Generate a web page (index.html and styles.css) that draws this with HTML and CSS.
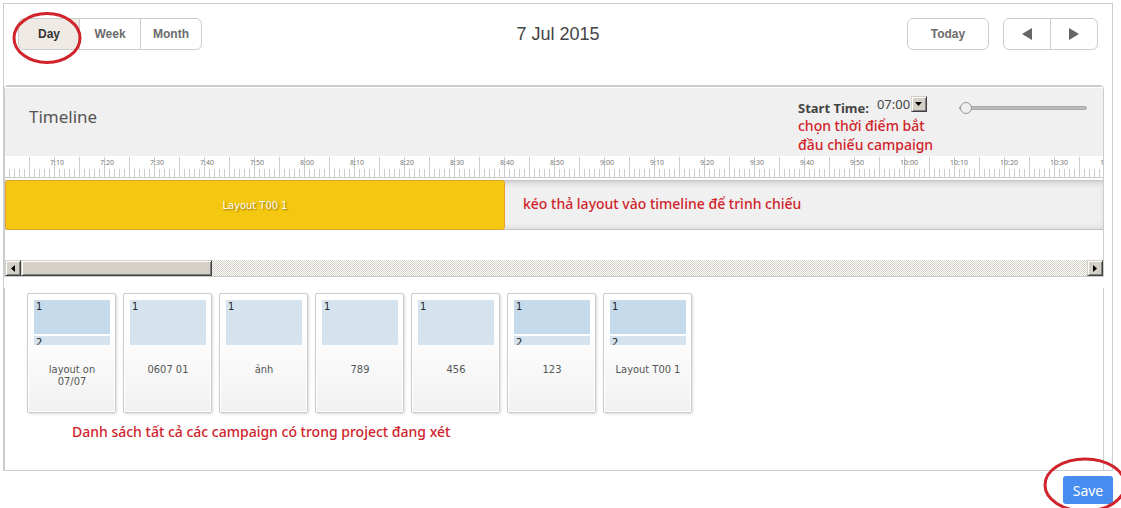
FILE: index.html
```
<!DOCTYPE html>
<html lang="vi">
<head>
<meta charset="utf-8">
<title>Timeline</title>
<link rel="stylesheet" href="styles.css">
</head>
<body>
<div class="page">
  <main class="scheduler">
    <header class="toolbar">
      <div class="views">
        <button class="btn active" type="button">Day
          <svg class="ring ring-day" viewBox="0 0 70 52" aria-hidden="true"><ellipse cx="35" cy="26" rx="33" ry="24.5"/></svg>
        </button>
        <button class="btn" type="button">Week</button>
        <button class="btn" type="button">Month</button>
      </div>
      <h1 class="date">7 Jul 2015</h1>
      <div class="nav">
        <button class="btn today" type="button">Today</button>
        <div class="pager">
          <button class="btn" type="button" aria-label="Previous"><svg width="10" height="12" viewBox="0 0 10 12"><path d="M10 0v12L0 6z"/></svg></button>
          <button class="btn" type="button" aria-label="Next"><svg width="10" height="12" viewBox="0 0 10 12"><path d="M0 0v12l10-6z"/></svg></button>
        </div>
      </div>
    </header>

    <section class="timeline">
      <div class="head">
        <h2 class="title">Timeline</h2>
        <div class="controls">
          <div class="start">
            <div class="start-row">
              <label for="start">Start Time:</label>
              <span class="select">
                <select id="start"><option>07:00</option></select>
                <span class="drop bevel"><svg width="7" height="4" viewBox="0 0 7 4"><path d="M0 0h7L3.500 4z"/></svg></span>
              </span>
            </div>
            <p class="note">chọn thời điểm bắt<br>đầu chiếu campaign</p>
          </div>
          <input class="zoom" type="range" min="0" max="100" value="0" aria-label="Zoom">
        </div>
      </div>
      <div class="ruler">
        <span>7:10</span><span>7:20</span><span>7:30</span><span>7:40</span><span>7:50</span><span>8:00</span><span>8:10</span><span>8:20</span><span>8:30</span><span>8:40</span><span>8:50</span><span>9:00</span><span>9:10</span><span>9:20</span><span>9:30</span><span>9:40</span><span>9:50</span><span>10:00</span><span>10:10</span><span>10:20</span><span>10:30</span><span>10:40</span>
      </div>
      <div class="track">
        <div class="event" style="width:500px">Layout T00 1</div>
        <p class="note">kéo thả layout vào timeline để trình chiếu</p>
      </div>
      <div class="scrollbar">
        <button class="bevel arrow" type="button" aria-label="Scroll left"><svg width="4" height="7" viewBox="0 0 4 7"><path d="M4 0v7L0 3.500z"/></svg></button>
        <div class="bevel thumb"></div>
        <button class="bevel arrow end" type="button" aria-label="Scroll right"><svg width="4" height="7" viewBox="0 0 4 7"><path d="M0 0v7l4-3.500z"/></svg></button>
      </div>
    </section>

    <section class="library">
      <ul class="cards">
        <li class="card"><div class="thumbnail split"><span>1</span><span>2</span></div><p>layout on 07/07</p></li>
        <li class="card"><div class="thumbnail"><span>1</span></div><p>0607 01</p></li>
        <li class="card"><div class="thumbnail"><span>1</span></div><p>ảnh</p></li>
        <li class="card"><div class="thumbnail"><span>1</span></div><p>789</p></li>
        <li class="card"><div class="thumbnail"><span>1</span></div><p>456</p></li>
        <li class="card"><div class="thumbnail split"><span>1</span><span>2</span></div><p>123</p></li>
        <li class="card"><div class="thumbnail split"><span>1</span><span>2</span></div><p>Layout T00 1</p></li>
      </ul>
      <p class="note">Danh sách tất cả các campaign có trong project đang xét</p>
    </section>
  </main>
  <footer class="footer">
    <button class="save" type="button">Save
      <svg class="ring ring-save" viewBox="0 0 84 56" aria-hidden="true"><ellipse cx="42" cy="28" rx="40" ry="26"/></svg>
    </button>
  </footer>
</div>
</body>
</html>
```
FILE: styles.css
```
* { box-sizing: border-box; }
body {
  margin: 0;
  background: #fff;
  color: #555;
  font: 11px/12px "DejaVu Sans Condensed", "Noto Sans", sans-serif;
}
h1, h2, p, ul { margin: 0; padding: 0; font-weight: normal; }
button { font: inherit; color: inherit; padding: 0; }

.page { min-height: 100vh; padding: 3px 8px 4px 3px; overflow: hidden; }
.scheduler { border: 1px solid #ccc; }

/* Toolbar */
.toolbar {
  display: grid;
  grid-template-columns: 1fr auto 1fr;
  align-items: center;
  padding: 14px 14px 36px;
}
.views, .pager, .nav { display: flex; }
.nav { justify-content: flex-end; gap: 14px; }
.btn {
  position: relative;
  display: flex;
  align-items: center;
  justify-content: center;
  width: 62px;
  height: 32px;
  border: 1px solid #ccc;
  background: #fff;
  color: #6b6b6b;
  font: bold 12px/16px "Liberation Sans", Arial, sans-serif;
}
.btn + .btn { margin-left: -1px; }
.btn:first-child { border-radius: 6px 0 0 6px; }
.btn:last-child { border-radius: 0 6px 6px 0; }
.btn.active { background: #efebe4; color: #333; z-index: 1; }
.btn.today { width: 82px; border-radius: 6px; }
.pager .btn { width: 48px; }
.btn svg { fill: #666; }
.date { font: 18px/24px "Liberation Sans", Arial, sans-serif; color: #444; }

.btn .ring, .ring { position: absolute; fill: none; stroke: #d0232b; stroke-width: 3; pointer-events: none; }
.ring-day { left: -7px; top: -7px; width: 70px; height: 52px; }
.ring-save { left: -20px; top: -19px; width: 84px; height: 56px; }

/* Timeline */
.timeline { margin-right: 8px; border: 1px solid #ccc; border-radius: 4px 4px 0 0; box-shadow: 0 -1px #ccc; }
.head {
  display: flex;
  justify-content: space-between;
  align-items: flex-start;
  min-height: 69px;
  padding: 8px 16px 0 24px;
  border-top: 1px solid #fff;
  background: #f0f0f0;
}
.title { padding-top: 9px; font: 17px/24px "Noto Sans", sans-serif; color: #555; }
.controls { display: flex; gap: 24px; }
.start { width: 137px; }
.start-row { display: flex; gap: 8px; height: 20px; }
.start-row label { padding-top: 4px; font: bold 13px/16px "Noto Sans", sans-serif; color: #444; }
.select { display: grid; align-self: flex-start; }
.select select, .drop { grid-area: 1 / 1; }
.select select {
  appearance: none;
  width: 50px;
  height: 16px;
  padding: 0;
  border: 0;
  background: none;
  color: #444;
  font: 13px/16px "Noto Sans", sans-serif;
}
.drop { justify-self: end; pointer-events: none; display: grid; place-items: center; width: 16px; height: 16px; }
.bevel {
  border: 1px solid;
  border-color: #d4d0c8 #404040 #404040 #d4d0c8;
  background: #d4d0c8;
  box-shadow: inset 1px 1px #fff, inset -1px -1px #808080;
}
.note { font: 500 14px/19px "Noto Sans", sans-serif; color: #d0232b; white-space: nowrap; }
.zoom { appearance: none; width: 128px; height: 12px; margin: 6px 0 0; background: none; }
.zoom::-webkit-slider-runnable-track { height: 4px; border: 1px solid #aaa; border-radius: 2px; background: #bbb; }
.zoom::-webkit-slider-thumb {
  appearance: none;
  width: 12px;
  height: 12px;
  margin-top: -5px;
  border: 1px solid #999;
  border-radius: 50%;
  background: #eee;
}

.ruler {
  display: flex;
  height: 22px;
  padding-left: 45px;
  overflow: hidden;
  border-bottom: 1px solid #ccc;
  background:
    repeating-linear-gradient(90deg, transparent 0 24px, #ccc 24px 25px) 0 1px / 100% 20px no-repeat,
    repeating-linear-gradient(90deg, transparent 0 4px, #ccc 4px 5px) 0 13px / 100% 8px no-repeat;
}
.ruler span { flex: 0 0 50px; padding-top: 2px; font: 7px/10px "Noto Sans", sans-serif; color: #777; }

.track {
  display: flex;
  height: 50px;
  margin-top: 2px;
  border: solid #c4c4c4;
  border-width: 1px 0;
  background: #f0f0f0;
  box-shadow: inset 0 5px 6px -3px #ccc, inset 0 -5px 6px -3px #ddd;
}
.event {
  flex: none;
  margin: -1px 0;
  border: 1px solid #e5a02c;
  border-radius: 3px;
  background: #f4c811;
  color: #fff;
  line-height: 50px;
  text-align: center;
  text-shadow: 1px 1px 2px #876a00;
}
.track .note { padding: 13px 0 0 18px; }

.scrollbar {
  display: flex;
  height: 16px;
  margin-top: 30px;
  background: repeating-conic-gradient(#d4d0c8 0 25%, #fff 0 50%) 0 0 / 2px 2px;
}
.arrow { display: grid; place-items: center; width: 16px; }
.thumb { width: 191px; }
.end { margin-left: auto; }

/* Layout library */
.library { margin: 11px 8px 0 0; padding: 5px 22px 29px; border: solid #ccc; border-width: 0 1px; }
.cards { display: flex; flex-wrap: wrap; gap: 7px; list-style: none; }
.card {
  width: 89px;
  height: 120px;
  padding: 6px 5px 6px 6px;
  border: 1px solid #ccc;
  border-radius: 2px;
  background: linear-gradient(#fff 30%, #f1f1f1);
  box-shadow: inset 0 0 0 1px #fff, 1px 1px 3px #ddd;
  text-align: center;
}
.card p { padding: 19px 8px 0; }
.card:last-child p { padding: 19px 0 0; }
.thumbnail { display: flex; flex-direction: column; gap: 2px; height: 45px; overflow: hidden; color: #222; text-align: left; }
.thumbnail span { flex: 1; padding: 1px 0 0 2px; background: #d5e3ee; }
.split span { flex: none; height: 34px; }
.split span:first-child { background: #c5daea; }
.library .note { padding: 9px 0 0 45px; }

.footer { display: flex; justify-content: flex-end; padding-top: 5px; }
.save {
  position: relative;
  width: 50px;
  height: 28px;
  border: 0;
  border-radius: 3px;
  background: #468def;
  color: #fff;
  font: 14px/30px "Noto Sans", sans-serif;
}
```
